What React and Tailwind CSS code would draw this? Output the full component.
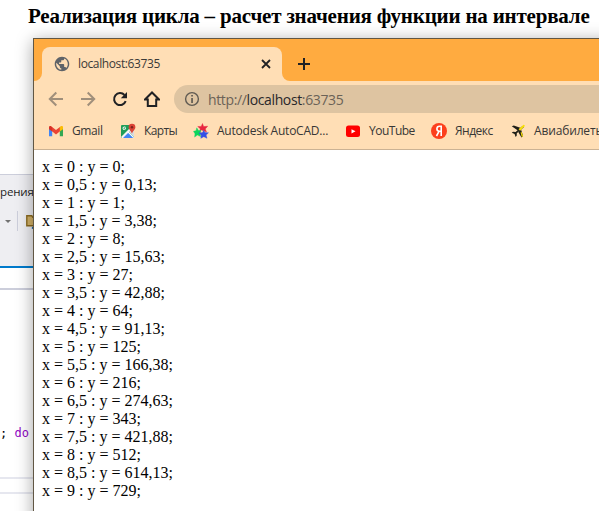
import React from "react";

const rows = [
  ["0", "0"], ["0,5", "0,13"], ["1", "1"], ["1,5", "3,38"], ["2", "8"],
  ["2,5", "15,63"], ["3", "27"], ["3,5", "42,88"], ["4", "64"], ["4,5", "91,13"],
  ["5", "125"], ["5,5", "166,38"], ["6", "216"], ["6,5", "274,63"], ["7", "343"],
  ["7,5", "421,88"], ["8", "512"], ["8,5", "614,13"], ["9", "729"],
];

const Globe = () => (
  <svg className="ml-[12px] size-[16px] shrink-0" viewBox="1 1 22 22">
    <path d="M12 2C6.48 2 2 6.48 2 12s4.48 10 10 10 10-4.48 10-10S17.52 2 12 2zm-1 17.93c-3.95-.49-7-3.85-7-7.93 0-.62.08-1.21.21-1.79L9 15v1c0 1.1.9 2 2 2v1.93zm6.9-2.54c-.26-.81-1-1.39-1.9-1.39h-1v-3c0-.55-.45-1-1-1H8v-2h2c.55 0 1-.45 1-1V7h2c1.1 0 2-.9 2-2v-.41c2.93 1.19 5 4.06 5 7.41 0 2.08-.8 3.97-2.1 5.39z" fill="#5f6368" />
  </svg>
);

const Nav = ({ d, faded, left }) => (
  <svg className={"size-[16px] shrink-0 " + left} viewBox="0 0 16 16" fill="none" stroke={faded ? "#a08f7b" : "#202124"} strokeWidth="2">
    {d}
  </svg>
);

const Gmail = () => (
  <svg className="size-4" viewBox="0 0 16 16">
    <path d="M1 5v8.3h3.2V7.3z" fill="#4285f4" />
    <path d="M15 5v8.3h-3.2V7.3z" fill="#34a853" />
    <path d="M3.4 3.5 4 8.2 8 11.6l4-3.4.6-4.7L8 6.9z" fill="#ea4335" />
    <path d="M1 4.2v2l3.2 2.3V4.2l-.8-.7C2.4 2.7 1 3.1 1 4.2z" fill="#d93025" />
    <path d="M15 4.2v2l-3.2 2.3V4.2l.8-.7c1-.8 2.4-.4 2.4.7z" fill="#fbbc04" />
  </svg>
);

const Maps = () => (
  <svg className="size-4" viewBox="0 0 16 16">
    <rect x="1" y="2" width="13" height="13" rx="1" fill="#1f9d58" />
    <path d="m2 15 6-6 6 6z" fill="#4285f4" />
    <path d="m1 14 9-9 1.5 1.5L3 15H2z" fill="#f5f5f5" />
    <path d="m8.5 8.5 5.5 5.5V7z" fill="#dadce0" />
    <path d="m7.7 8.7 6 6" stroke="#fff" strokeWidth="1.2" />
    <path d="M6 4.8H4.6v1h.5c-.3.9-1.6.7-1.6-.4s1-1.3 1.6-.7l.6-.6C4.4 3 2.6 3.8 2.6 5.4S5.8 8 6 4.8z" fill="#fff" />
    <path d="M12 .8a3.4 3.4 0 0 0-3.4 3.4c0 2.5 2.6 3.2 3.4 6.5.8-3.3 3.4-4 3.4-6.5A3.4 3.4 0 0 0 12 .8z" fill="#db4437" />
    <circle cx="12" cy="4.2" r="1.2" fill="#7b231b" />
  </svg>
);

const Stars = () => (
  <svg className="size-4" viewBox="0 0 16 16">
    <path d="m9.5.5 1.1 3.1 4.1-.4-2.4 2.7 1.2 3.1-3.4-1.5L6.8 9.4l.4-3.6L4.7 3.5l3.5-.1z" fill="#e8263f" stroke="#e8263f" strokeWidth=".4" />
    <path d="m3.8 4.8 1.6 2.7h3.1L6.7 10l1 3.6-3.3-1.5-2.8 2 .4-3.3L.5 8.3l2.5-.6z" fill="#0bd55c" stroke="#0bd55c" strokeWidth=".4" />
    <path d="m10.8 7.2 1.1 2.4 3.6.2-2.4 2.2.9 3.3-3.2-1.6-3 1.6.4-3-2.3-2.4 3.5-.4z" fill="#3450e6" stroke="#3450e6" strokeWidth=".4" />
    <circle cx="8.7" cy="8.3" r="1" fill="#ffdeb5" />
  </svg>
);

const YouTube = () => (
  <svg className="size-4" viewBox="0 0 16 16">
    <rect x="1" y="2.5" width="14" height="11.5" rx="2.5" fill="#f00" />
    <path d="m6.5 6.2 4 2.1-4 2.1z" fill="#fff" />
  </svg>
);

const Yandex = () => (
  <svg className="size-4" viewBox="0 0 16 16">
    <circle cx="8" cy="8" r="8" fill="#fc3f1d" />
    <path d="M10.2 13V3.2H8.6C6.8 3.2 5.9 4.3 5.9 5.8c0 1.6.9 2.5 2.6 2.5h1.7M8 8.3 5.5 13" fill="none" stroke="#fff" strokeWidth="1.6" />
  </svg>
);

const Plane = () => (
  <svg className="size-4" viewBox="0 0 16 16">
    <path d="m1.8 3.2 2-.6 6.4 2.2-2 3zM8.3 9l2.6-3 2.2 7-1.6 1.6z" fill="#202018" />
    <path d="M12.5 3 5.6 8.9 3 8.7l-1.2 1.1 2.8 1.1 1 3 1.1-1.1.1-2.6 7-6z" fill="#202018" />
    <path d="m8.6 6.2 4.6-4.3c1-.7 2 .3 1.3 1.3L10.2 7.8z" fill="#f7df08" />
    <path d="m10.6 9.5.8-.8 1.7 4.3-1.2 1.2z" fill="#f7df08" />
  </svg>
);

const Bookmark = ({ icon, children, width }) => (
  <div className="flex shrink-0 items-center whitespace-nowrap">
    <span className="flex size-4 shrink-0">{icon}</span>
    <span className={"ml-2 " + width}>{children}</span>
  </div>
);

export default function App() {
  return (
    <div className="flex h-[511px] w-[599px] flex-col overflow-hidden bg-white font-['Open_Sans',sans-serif]">
      <h1 className="h-[38px] shrink-0 whitespace-nowrap pl-[28px] pt-[4px] font-['Liberation_Serif',serif] text-[21px] font-bold leading-[24px] tracking-[-0.2px] text-black">
        Реализация цикла – расчет значения функции на интервале
      </h1>
      <div className="flex h-[473px]">
        <aside className="flex w-[33px] shrink-0 flex-col overflow-hidden">
          <div className="h-[136px] shrink-0" />
          <div className="h-[92px] shrink-0 border-t border-[#cccedb] bg-[#eeeef2]">
            <div className="mt-[8px] h-[17px] whitespace-nowrap text-[11.5px] leading-[17px] tracking-[-0.15px] text-[#1e1e1e]">рения</div>
            <div className="mt-[11px] flex h-[20px] items-center">
              <svg className="ml-[5px] h-[3px] w-[6px] shrink-0" viewBox="0 0 6 3"><path d="M0 0h6L3 3z" fill="#717171" /></svg>
              <span className="ml-[6px] h-[20px] w-px shrink-0 bg-[#cccedb]" />
              <svg className="ml-[8px] h-[16px] w-[14px] shrink-0" viewBox="0 0 14 16">
                <path d="M.8 2.8h5l1 1.5h7v8.5h-13z" fill="#d3b268" stroke="#8b6a20" strokeWidth="1.4" />
                <path d="m6 15.5 2-2" stroke="#00539c" strokeWidth="1.3" />
              </svg>
            </div>
          </div>
          <div className="h-[2px] shrink-0 bg-[#007acc]" />
          <div className="h-[20px] shrink-0" />
          <div className="h-[2px] shrink-0 bg-[#cccedb]" />
          <div className="h-[133px] shrink-0" />
          <pre className="h-[20px] shrink-0 font-['DejaVu_Sans_Mono',monospace] text-[12px] leading-[20px] text-black">; <span className="text-[#8f08c4]">do</span></pre>
          <div className="h-[34px] shrink-0" />
          <div className="h-[15px] shrink-0 border-t-2 border-[#e6e7ef]" />
          <div className="h-[15px] shrink-0 border-t-2 border-[#e6e7ef]" />
        </aside>
        <main className="relative flex h-[500px] w-[640px] shrink-0 flex-col border-l border-t border-[#615744] bg-white shadow-[0_3px_16px_rgba(0,0,0,0.36)]">
          <div className="flex h-[42px] shrink-0 items-end bg-[#ffab40]">
            <div className="h-[34px] w-[8px] bg-[#ffdeb5]"><div className="h-full rounded-br-[8px] bg-[#ffab40]" /></div>
            <div className="flex h-[34px] w-[240px] items-center rounded-t-[8px] bg-[#ffdeb5] text-[12px] tracking-[-0.38px] text-[#3b3a38]">
              <Globe />
              <span className="ml-[8px] w-[174px]">localhost:63735</span>
              <svg className="ml-[9px] size-[10px]" viewBox="0 0 10 10"><path d="m1 1 8 8M9 1 1 9" stroke="#202124" strokeWidth="1.8" /></svg>
            </div>
            <div className="h-[34px] w-[8px] bg-[#ffdeb5]"><div className="h-full rounded-bl-[8px] bg-[#ffab40]" /></div>
            <svg className="mb-[11px] ml-[8px] size-[12px]" viewBox="0 0 12 12"><path d="M6 0v12M0 6h12" stroke="#202124" strokeWidth="2" /></svg>
          </div>
          <div className="flex h-[36px] shrink-0 items-center bg-[#ffdeb5]">
            <Nav left="ml-[14px]" faded d={<path d="M15 8H2M8.3 1.5 1.8 8l6.5 6.5" />} />
            <Nav left="ml-[16px]" faded d={<path d="M1 8h13M7.7 1.5 14.2 8l-6.5 6.5" />} />
            <Nav left="ml-[16px]" d={<><path d="M13.7 10.2A6 6 0 1 1 12.5 4" /><path d="M15 1v6.2H8.8z" fill="#202124" stroke="none" /></>} />
            <Nav left="ml-[16px]" d={<path d="M1 8.5h2.8V15h8.4V8.5H15L8 1.5z" />} />
            <div className="ml-[14px] flex h-[28px] w-[480px] items-center rounded-l-full bg-[#dec4a1] text-[14px] text-[#6b6257]">
              <svg className="ml-[10px] size-[16px] shrink-0" viewBox="0 0 16 16">
                <circle cx="8" cy="8" r="6.4" fill="none" stroke="#5f5a52" strokeWidth="1.4" />
                <path d="M7.2 4h1.7v1.6H7.2zM7.2 7h1.7v5H7.2z" fill="#5f5a52" />
              </svg>
              <span className="ml-[8px] whitespace-nowrap tracking-[-0.37px]">http://<span className="text-[#29272a]">localhost</span>:63735</span>
            </div>
          </div>
          <div className="flex h-[33px] shrink-0 items-start border-b border-[#cbb294] bg-[#ffdeb5] pl-[14px] pt-[6px] text-[12px] leading-4 text-[#383736]">
            <Bookmark width="w-[48px] tracking-[-0.4px]" icon={<Gmail />}>Gmail</Bookmark>
            <Bookmark width="w-[49px] tracking-[-0.6px]" icon={<Maps />}>Карты</Bookmark>
            <Bookmark width="w-[128px] tracking-[-0.23px]" icon={<Stars />}>Autodesk AutoCAD...</Bookmark>
            <Bookmark width="w-[62px] tracking-[-0.5px]" icon={<YouTube />}>YouTube</Bookmark>
            <Bookmark width="w-[55px] tracking-[-0.5px]" icon={<Yandex />}>Яндекс</Bookmark>
            <Bookmark width="w-[90px] tracking-[-0.15px]" icon={<Plane />}>Авиабилеты</Bookmark>
          </div>
          <div className="pl-[8px] pt-[8px] font-['Liberation_Serif',serif] text-[16px] leading-[18px] text-black">
            {rows.map(([x, y]) => <div key={x}>x = {x} : y = {y};</div>)}
          </div>
        </main>
      </div>
    </div>
  );
}
